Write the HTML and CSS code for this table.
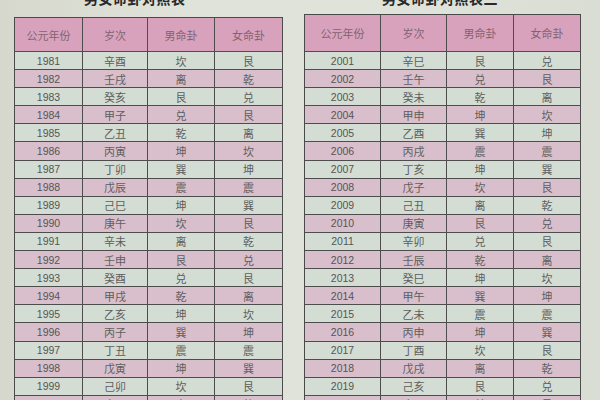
FILE: index.html
```html
<!DOCTYPE html>
<html lang="zh">
<head>
<meta charset="utf-8">
<link rel="stylesheet" href="styles.css">
</head>
<body>
<div class="page">
  <section class="panel panel-left">
    <h2 class="title">男女命卦对照表一</h2>
    <div class="grid">
      <div class="h">公元年份</div><div class="h">岁次</div><div class="h">男命卦</div><div class="h">女命卦</div>
      <div class="c n">1981</div><div class="c">辛酉</div><div class="c">坎</div><div class="c">艮</div>
      <div class="c n p">1982</div><div class="c p">壬戌</div><div class="c p">离</div><div class="c p">乾</div>
      <div class="c n">1983</div><div class="c">癸亥</div><div class="c">艮</div><div class="c">兑</div>
      <div class="c n p">1984</div><div class="c p">甲子</div><div class="c p">兑</div><div class="c p">艮</div>
      <div class="c n">1985</div><div class="c">乙丑</div><div class="c">乾</div><div class="c">离</div>
      <div class="c n p">1986</div><div class="c p">丙寅</div><div class="c p">坤</div><div class="c p">坎</div>
      <div class="c n">1987</div><div class="c">丁卯</div><div class="c">巽</div><div class="c">坤</div>
      <div class="c n p">1988</div><div class="c p">戊辰</div><div class="c p">震</div><div class="c p">震</div>
      <div class="c n">1989</div><div class="c">己巳</div><div class="c">坤</div><div class="c">巽</div>
      <div class="c n p">1990</div><div class="c p">庚午</div><div class="c p">坎</div><div class="c p">艮</div>
      <div class="c n">1991</div><div class="c">辛未</div><div class="c">离</div><div class="c">乾</div>
      <div class="c n p">1992</div><div class="c p">壬申</div><div class="c p">艮</div><div class="c p">兑</div>
      <div class="c n">1993</div><div class="c">癸酉</div><div class="c">兑</div><div class="c">艮</div>
      <div class="c n p">1994</div><div class="c p">甲戌</div><div class="c p">乾</div><div class="c p">离</div>
      <div class="c n">1995</div><div class="c">乙亥</div><div class="c">坤</div><div class="c">坎</div>
      <div class="c n p">1996</div><div class="c p">丙子</div><div class="c p">巽</div><div class="c p">坤</div>
      <div class="c n">1997</div><div class="c">丁丑</div><div class="c">震</div><div class="c">震</div>
      <div class="c n p">1998</div><div class="c p">戊寅</div><div class="c p">坤</div><div class="c p">巽</div>
      <div class="c n">1999</div><div class="c">己卯</div><div class="c">坎</div><div class="c">艮</div>
      <div class="c n p">2000</div><div class="c p">庚辰</div><div class="c p">离</div><div class="c p">乾</div>
    </div>
  </section>
  <section class="panel panel-right">
    <h2 class="title">男女命卦对照表二</h2>
    <div class="grid">
      <div class="h">公元年份</div><div class="h">岁次</div><div class="h">男命卦</div><div class="h">女命卦</div>
      <div class="c n">2001</div><div class="c">辛巳</div><div class="c">艮</div><div class="c">兑</div>
      <div class="c n p">2002</div><div class="c p">壬午</div><div class="c p">兑</div><div class="c p">艮</div>
      <div class="c n">2003</div><div class="c">癸未</div><div class="c">乾</div><div class="c">离</div>
      <div class="c n p">2004</div><div class="c p">甲申</div><div class="c p">坤</div><div class="c p">坎</div>
      <div class="c n">2005</div><div class="c">乙酉</div><div class="c">巽</div><div class="c">坤</div>
      <div class="c n p">2006</div><div class="c p">丙戌</div><div class="c p">震</div><div class="c p">震</div>
      <div class="c n">2007</div><div class="c">丁亥</div><div class="c">坤</div><div class="c">巽</div>
      <div class="c n p">2008</div><div class="c p">戊子</div><div class="c p">坎</div><div class="c p">艮</div>
      <div class="c n">2009</div><div class="c">己丑</div><div class="c">离</div><div class="c">乾</div>
      <div class="c n p">2010</div><div class="c p">庚寅</div><div class="c p">艮</div><div class="c p">兑</div>
      <div class="c n">2011</div><div class="c">辛卯</div><div class="c">兑</div><div class="c">艮</div>
      <div class="c n p">2012</div><div class="c p">壬辰</div><div class="c p">乾</div><div class="c p">离</div>
      <div class="c n">2013</div><div class="c">癸巳</div><div class="c">坤</div><div class="c">坎</div>
      <div class="c n p">2014</div><div class="c p">甲午</div><div class="c p">巽</div><div class="c p">坤</div>
      <div class="c n">2015</div><div class="c">乙未</div><div class="c">震</div><div class="c">震</div>
      <div class="c n p">2016</div><div class="c p">丙申</div><div class="c p">坤</div><div class="c p">巽</div>
      <div class="c n">2017</div><div class="c">丁酉</div><div class="c">坎</div><div class="c">艮</div>
      <div class="c n p">2018</div><div class="c p">戊戌</div><div class="c p">离</div><div class="c p">乾</div>
      <div class="c n">2019</div><div class="c">己亥</div><div class="c">艮</div><div class="c">兑</div>
      <div class="c n p">2020</div><div class="c p">庚子</div><div class="c p">兑</div><div class="c p">艮</div>
    </div>
  </section>
</div>
</body>
</html>
```

FILE: styles.css
```css
html, body {
  margin: 0;
  padding: 0;
  width: 600px;
  height: 400px;
  overflow: hidden;
  background: #dde0d6;
  font-family: "Noto Sans CJK SC", "Noto Sans", sans-serif;
}

.page {
  display: flex;
  gap: 21px;
  padding-left: 14px;
  height: 400px;
  overflow: hidden;
  background: linear-gradient(90deg, #d6d8cd 0%, #e0e3d9 30%, #dfe3da 70%, #d9ddd3 100%);
}

.panel {
  display: flex;
  flex-direction: column;
}

.title {
  margin: -9px 0 0 0;
  height: 15px;
  font-size: 14px;
  line-height: 15px;
  font-weight: 700;
  color: #2a2a2a;
  letter-spacing: 0.5px;
}

.panel-left .title {
  margin-left: 70px;
}

.panel-right .title {
  margin-left: 78px;
}

.panel-left .title,
.panel-right .title {
  margin-bottom: 11px;
}

.panel-right .title {
  margin-bottom: 8px;
}

.grid {
  display: grid;
  border-top: 1.5px solid #4a4a4a;
  border-left: 1.5px solid #4a4a4a;
}

.panel-left .grid {
  grid-template-columns: 68px 65px 67px 68px;
  grid-template-rows: 34px;
  grid-auto-rows: 18.1px;
}

.panel-right .grid {
  grid-template-columns: 76px 66px 67px 67px;
  grid-template-rows: 37px;
  grid-auto-rows: 18.1px;
}

.h,
.c {
  display: flex;
  align-items: center;
  justify-content: center;
  border-right: 1px solid #4d4d4d;
  border-bottom: 1px solid #4d4d4d;
  color: #5e5e5e;
}

.h {
  background: #d8a2bd;
  color: #836271;
  font-size: 11px;
}

.c {
  background: #d4ddd3;
  font-size: 11px;
}

.c.p {
  background: #d9bfcb;
}

.n {
  font-family: "Liberation Sans", Arial, sans-serif;
  font-size: 10.5px;
  color: #555;
}
```
